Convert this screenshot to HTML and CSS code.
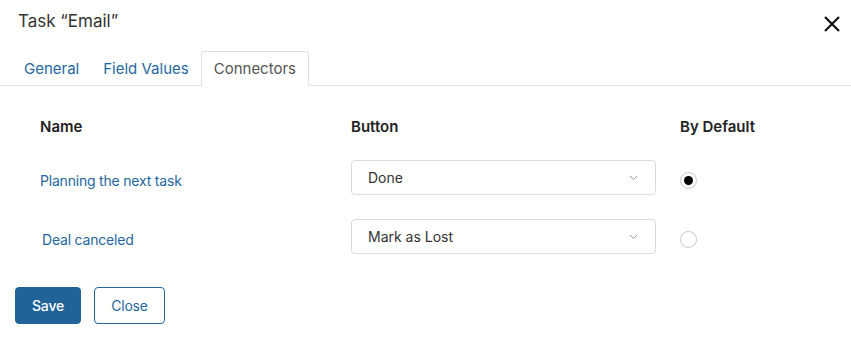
FILE: index.html
```html
<!DOCTYPE html>
<html lang="en">
<head>
  <meta charset="UTF-8" />
  <title>Task Email</title>
  <link rel="stylesheet" href="styles.css">
</head>
<body>

  <!-- Header -->
  <div class="header">
    <div class="title">Task “Email”</div>
    <button class="close-x" aria-label="Close">
      <svg width="18" height="18" viewBox="0 0 18 18">
        <path d="M2 2 L16 16 M16 2 L2 16" stroke="#111" stroke-width="2.2" fill="none" />
      </svg>
    </button>
  </div>

  <!-- Tabs -->
  <div class="tabs">
    <div class="tab">General</div>
    <div class="tab">Field Values</div>
    <div class="tab active">Connectors</div>
  </div>

  <!-- Connectors table -->
  <div class="connectors">
    <div class="col-head">Name</div>
    <div class="col-head">Button</div>
    <div class="col-head">By Default</div>

    <div class="name"><a href="#">Planning the next task</a></div>
    <div class="select">
      <span>Done</span>
      <svg class="chevron" width="9" height="6" viewBox="0 0 9 6">
        <path d="M1 1 L4.5 4.5 L8 1" stroke="#9a9a9a" stroke-width="1" fill="none" />
      </svg>
    </div>
    <div class="radio-cell"><span class="radio checked"></span></div>

    <div class="name shift"><a href="#">Deal canceled</a></div>
    <div class="select">
      <span>Mark as Lost</span>
      <svg class="chevron" width="9" height="6" viewBox="0 0 9 6">
        <path d="M1 1 L4.5 4.5 L8 1" stroke="#9a9a9a" stroke-width="1" fill="none" />
      </svg>
    </div>
    <div class="radio-cell"><span class="radio"></span></div>
  </div>

  <!-- Footer -->
  <div class="footer">
    <button class="btn btn-save">Save</button>
    <button class="btn btn-close">Close</button>
  </div>

</body>
</html>
```

FILE: styles.css
```css
body {
  margin: 0;
  padding: 0;
  font-family: Inter, "Open Sans", Arial, sans-serif;
  background: #fff;
  color: #333;
}

.header {
  height: 51px;
  padding: 0 10px 0 18px;
  display: flex;
  justify-content: space-between;
  align-items: flex-start;
}

.title {
  margin-top: 8px;
  font-size: 17px;
  line-height: 26px;
  color: #333;
}

.close-x {
  margin-top: 15px;
  background: none;
  border: none;
  padding: 0;
  width: 18px;
  height: 18px;
  cursor: pointer;
}

.tabs {
  display: flex;
  padding-left: 12px;
  border-bottom: 1px solid #e1e3e8;
  height: 34px;
}

.tab {
  padding: 0 12px;
  font-size: 15px;
  line-height: 36px;
  color: #2467a0;
}

.tab.active {
  color: #555;
  border: 1px solid #dfe1e6;
  border-bottom: none;
  border-radius: 3px 3px 0 0;
  background: #fff;
  height: 35px;
  margin-bottom: -1px;
  box-sizing: border-box;
  line-height: 34px;
}

.connectors {
  display: grid;
  grid-template-columns: 311px 329px 1fr;
  row-gap: 24px;
  padding: 31px 0 0 40px;
  align-items: center;
}

.col-head {
  font-size: 15px;
  font-weight: 600;
  line-height: 20px;
  color: #222;
  margin-bottom: -1px;
}

.name {
  font-size: 14px;
  padding-top: 6px;
}

.name.shift {
  padding-left: 2px;
}

.name a {
  color: #2467a0;
  text-decoration: none;
  letter-spacing: -0.2px;
}

.select {
  width: 305px;
  height: 35px;
  box-sizing: border-box;
  border: 1px solid #d9dbe0;
  border-radius: 4px;
  display: flex;
  align-items: center;
  justify-content: space-between;
  padding: 0 17px 0 16px;
  font-size: 14px;
  color: #333;
}

.chevron {
  margin-top: 1px;
}

.radio-cell {
  padding-top: 5px;
}

.radio {
  display: block;
  width: 17px;
  height: 17px;
  box-sizing: border-box;
  border: 1px solid #c8c8c8;
  border-radius: 50%;
  background: #fff;
  position: relative;
}

.radio.checked::after {
  content: "";
  position: absolute;
  left: 3px;
  top: 3px;
  width: 9px;
  height: 9px;
  border-radius: 50%;
  background: #000;
}

.footer {
  display: flex;
  gap: 13px;
  padding: 33px 0 0 15px;
}

.btn {
  height: 37px;
  box-sizing: border-box;
  border-radius: 4px;
  font-family: Inter, "Open Sans", Arial, sans-serif;
  font-size: 14px;
  cursor: pointer;
  letter-spacing: -0.2px;
}

.btn-save {
  width: 66px;
  background: #1f6398;
  color: #fff;
  border: 1px solid #1f6398;
  font-weight: 500;
}

.btn-close {
  width: 71px;
  background: #fff;
  color: #2467a0;
  border: 1px solid #2467a0;
}
```
